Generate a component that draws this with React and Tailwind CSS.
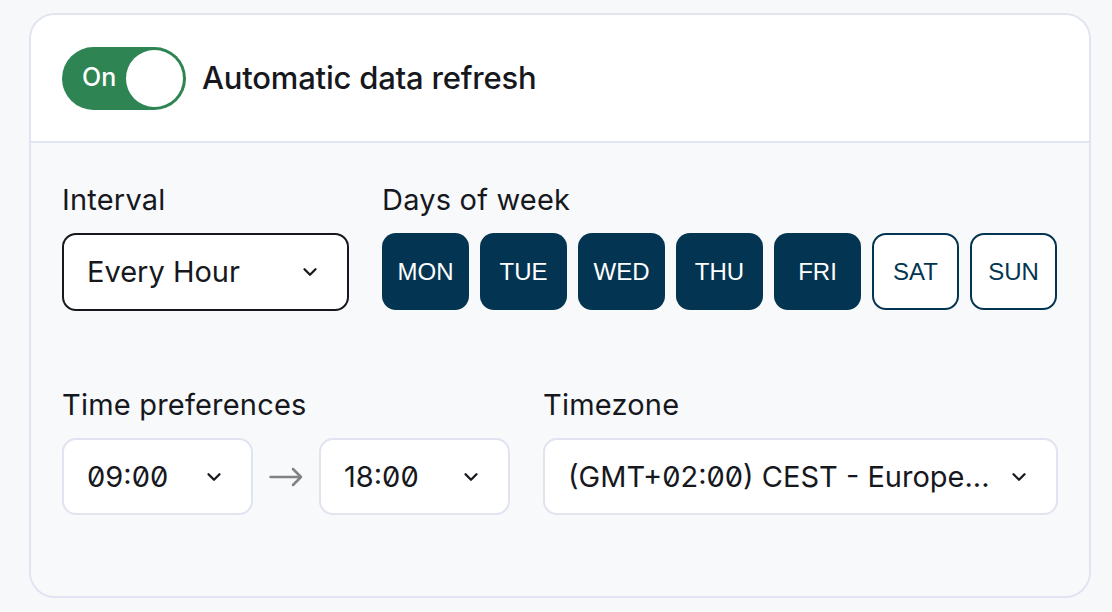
import { ChevronDown } from 'lucide-react';

const days = [
  { label: 'MON', on: true },
  { label: 'TUE', on: true },
  { label: 'WED', on: true },
  { label: 'THU', on: true },
  { label: 'FRI', on: true },
  { label: 'SAT', on: false },
  { label: 'SUN', on: false },
];

const Select = ({ value, className }) => (
  <div
    className={`flex items-center justify-between bg-white rounded-[14px] h-[77px] pl-[23px] pr-[26px] text-[29px] text-[#16181d] ${className}`}
  >
    <span className="truncate" style={{ fontFeatureSettings: '"zero"' }}>{value}</span>
    <ChevronDown size={22} strokeWidth={2.5} className="shrink-0 ml-3" />
  </div>
);

export default function App() {
  return (
    <div className="min-h-screen bg-[#f7f8fa] pl-[29px] pt-[13px]" style={{ fontFamily: 'Inter, "Noto Sans", sans-serif' }}>
      <div className="w-[1062px] h-[585px] border-2 border-[#e1e4f0] rounded-[26px] overflow-hidden flex flex-col">
        <div className="bg-white border-b-2 border-[#e1e4f0] h-[128px] flex items-center pl-[31px] gap-4">
          <div className="relative w-[124px] h-[63px] rounded-full bg-[#2e8553] shrink-0">
            <span className="absolute left-[20px] top-1/2 -translate-y-1/2 text-white text-[25px] font-medium">On</span>
            <span className="absolute right-[3px] top-[3px] w-[57px] h-[57px] rounded-full bg-white"></span>
          </div>
          <h2 className="text-[31px] font-medium text-[#16181d] tracking-[-0.2px]">Automatic data refresh</h2>
        </div>

        <div className="flex-1 bg-[#f8f9fb] px-[31px] pt-[40px]">
          <div className="flex gap-[33px]">
            <div>
              <div className="text-[29px] leading-[34px] tracking-[0.2px] text-[#16181d] mb-[16px]">Interval</div>
              <Select value="Every Hour" className="w-[287px] h-[78px] border-2 border-[#16181d]" />
            </div>
            <div>
              <div className="text-[29px] leading-[34px] tracking-[0.2px] text-[#16181d] mb-[16px]">Days of week</div>
              <div className="flex gap-[11px]">
                {days.map((d) => (
                  <button
                    key={d.label}
                    className={`w-[87px] h-[77px] rounded-[14px] text-[24px] ${d.on ? 'bg-[#033552] text-white' : 'bg-white text-[#033552] border-2 border-[#033552]'}`}
                    style={{ fontFamily: '"Liberation Sans", Arial, sans-serif' }}
                  >
                    {d.label}
                  </button>
                ))}
              </div>
            </div>
          </div>

          <div className="flex gap-[33px] mt-[77px]">
            <div>
              <div className="text-[29px] leading-[34px] tracking-[0.2px] text-[#16181d] mb-[16px]">Time preferences</div>
              <div className="flex items-center">
                <Select value="09:00" className="w-[191px] border-2 border-[#e1e4f0]" />
                <svg width="34" height="20" viewBox="0 0 34 20" fill="none" stroke="#808285" strokeWidth="2.5" strokeLinecap="round" strokeLinejoin="round" className="mx-[16px]">
                  <path d="M1.5 10H32M24 2l8 8-8 8" />
                </svg>
                <Select value="18:00" className="w-[191px] border-2 border-[#e1e4f0]" />
              </div>
            </div>
            <div>
              <div className="text-[29px] leading-[34px] tracking-[0.2px] text-[#16181d] mb-[16px]">Timezone</div>
              <Select value="(GMT+02:00) CEST - Europe..." className="w-[515px] border-2 border-[#e1e4f0]" />
            </div>
          </div>
        </div>
      </div>
    </div>
  );
}
